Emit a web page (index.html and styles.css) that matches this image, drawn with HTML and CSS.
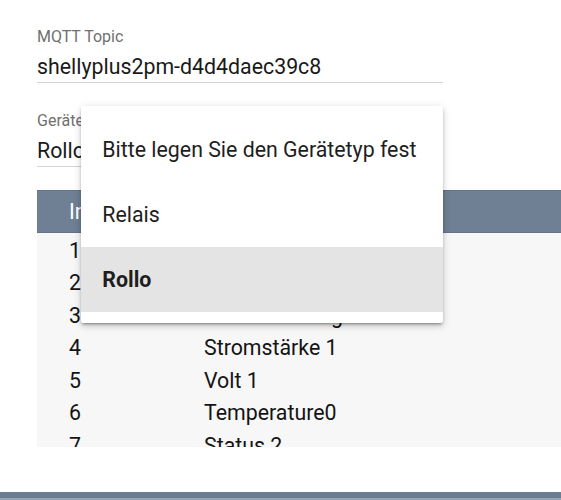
FILE: index.html
```html
<!DOCTYPE html>
<html lang="de">
<head>
<meta charset="utf-8">
<title>Gerät</title>
<link rel="stylesheet" href="styles.css">
</head>
<body>
<div class="page">
  <div class="form">
    <div class="field">
      <div class="label">MQTT Topic</div>
      <div class="value">shellyplus2pm-d4d4daec39c8</div>
    </div>
    <div class="field">
      <div class="label">Gerätetyp</div>
      <div class="value">Rollo</div>
    </div>
  </div>

  <div class="table">
    <div class="thead">
      <div class="col1">Index</div>
      <div class="col2">Name</div>
    </div>
    <div class="tbody">
      <div class="row"><div class="col1">1</div><div class="col2">Status 1</div></div>
      <div class="row"><div class="col1">2</div><div class="col2">Position 1</div></div>
      <div class="row"><div class="col1">3</div><div class="col2">Scheinleistung 1</div></div>
      <div class="row"><div class="col1">4</div><div class="col2">Stromstärke 1</div></div>
      <div class="row"><div class="col1">5</div><div class="col2">Volt 1</div></div>
      <div class="row"><div class="col1">6</div><div class="col2">Temperature0</div></div>
      <div class="row"><div class="col1">7</div><div class="col2">Status 2</div></div>
      <div class="row"><div class="col1">8</div><div class="col2">Position 2</div></div>
    </div>
  </div>

  <div class="bottombar"></div>

  <div class="menu">
    <div class="item">Bitte legen Sie den Gerätetyp fest</div>
    <div class="item">Relais</div>
    <div class="item selected">Rollo</div>
  </div>
</div>
</body>
</html>
```

FILE: styles.css
```css
html, body {
  margin: 0;
  padding: 0;
  background: #ffffff;
  overflow: hidden;
}

body {
  font-family: Roboto, "Liberation Sans", sans-serif;
  color: #1c1c1c;
}

.page {
  position: relative;
  width: 561px;
  height: 500px;
  overflow: hidden;
}

.form {
  display: flex;
  flex-direction: column;
  gap: 28px;
  padding: 27px 0 0 37px;
}

.field {
  width: 406px;
  border-bottom: 1px solid #d4d4d4;
  padding-bottom: 1px;
}

.label {
  font-size: 16px;
  line-height: 20px;
  color: #707070;
  white-space: nowrap;
  overflow: hidden;
}

.value {
  margin-top: 6px;
  font-size: 21.33px;
  line-height: 28px;
  color: #1a1a1a;
}

.table {
  margin: 23px 0 0 37px;
  height: 257px;
  overflow: hidden;
  width: 560px;
}

.thead {
  display: flex;
  height: 43px;
  box-sizing: border-box;
  background: #6f8095;
  border-top: 1px solid #637489;
  border-bottom: 1px solid #637489;
  color: #ffffff;
  font-size: 21.33px;
  align-items: center;
}

.tbody {
  background: #f7f7f7;
  padding-top: 1px;
  height: 214px;
}

.row {
  display: flex;
  height: 32.5px;
  align-items: center;
  font-size: 21.33px;
  color: #141414;
}

.col1 {
  width: 135px;
  padding-left: 32px;
  flex: none;
}

.col2 {
  flex: 1;
  white-space: nowrap;
}

.bottombar {
  margin-top: 45px;
  height: 6px;
  background: #6c7d92;
  border-bottom: 2px solid #95a5b8;
}

.menu {
  position: absolute;
  left: 81px;
  top: 106px;
  width: 362px;
  padding: 11px 0;
  background: #ffffff;
  border-radius: 2px;
  box-shadow: 0 2px 3px -1px rgba(0,0,0,0.4), 0 4px 6px 0 rgba(0,0,0,0.12), 0 1px 10px 0 rgba(0,0,0,0.10);
}

.item {
  height: 65px;
  line-height: 65px;
  padding-left: 21.33px;
  font-size: 21.33px;
  color: #1e1e1e;
  white-space: nowrap;
}

.item.selected {
  background: #e4e4e4;
  font-weight: 700;
}
```
